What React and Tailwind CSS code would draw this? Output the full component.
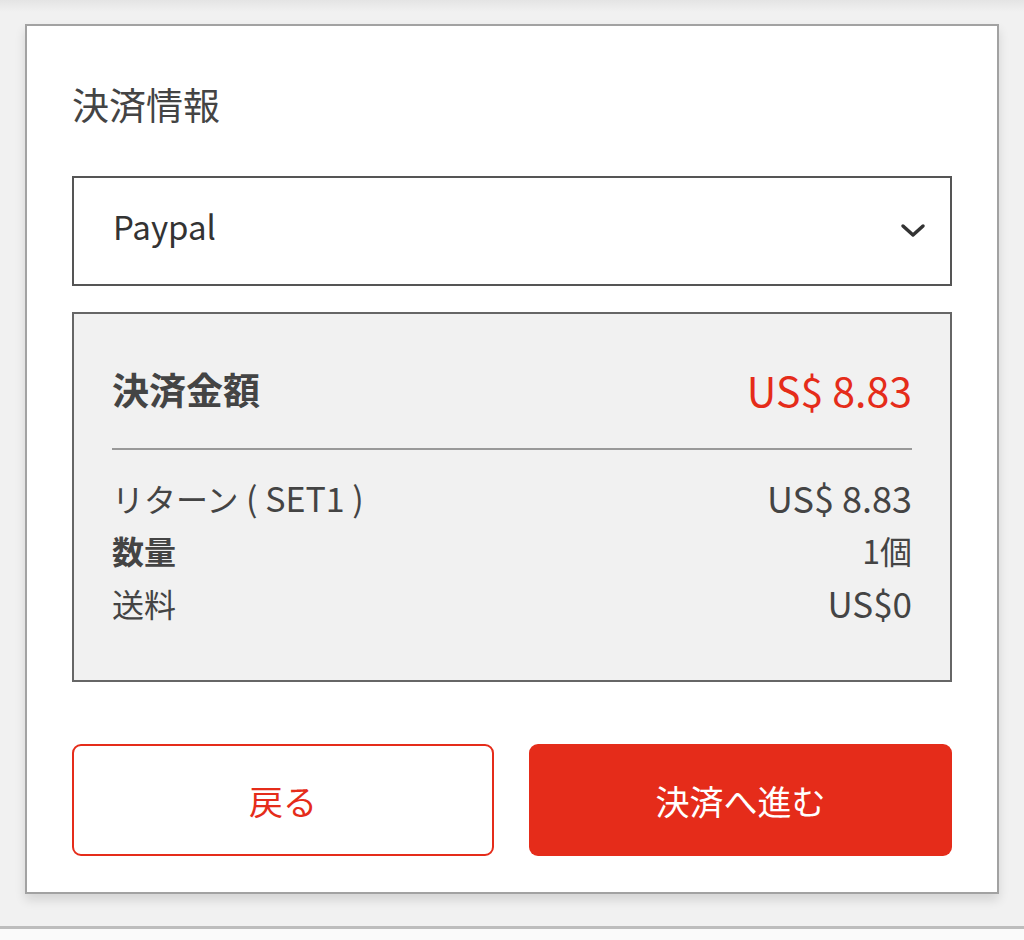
import React from "react";

const font = { fontFamily: '"Noto Sans CJK JP", "Noto Sans", sans-serif' };

export default function App() {
  return (
    <div className="w-[1024px] h-[940px] bg-[#f1f1f1] flex flex-col overflow-hidden" style={font}>
      <div className="h-[12px] bg-gradient-to-b from-[#e4e4e4] to-[#f1f1f1] shrink-0" />
      <div className="ml-[25px] mt-[12px] w-[974px] h-[870px] shrink-0 bg-white border-2 border-[#a2a2a2] shadow-[0_6px_10px_rgba(0,0,0,0.12)] px-[45px] pt-[54px] flex flex-col">
        <div className="h-[48px] leading-[48px] text-[37px] text-[#444]">決済情報</div>
        <div className="mt-[48px] h-[110px] border-2 border-[#555] flex items-center justify-between pl-[39px] pr-[24px]">
          <span className="text-[33px] text-[#333] mb-[8px]">Paypal</span>
          <svg width="26" height="16" viewBox="0 0 26 16">
            <polyline points="3,3 13,12 23,3" fill="none" stroke="#333" strokeWidth="3.5" strokeLinecap="round" strokeLinejoin="round" />
          </svg>
        </div>
        <div className="mt-[26px] h-[370px] bg-[#f1f1f1] border-2 border-[#666] px-[38px] pt-[48px] flex flex-col">
          <div className="h-[56px] flex items-center justify-between">
            <span className="text-[37px] font-bold text-[#444]">決済金額</span>
            <span className="text-[41px] text-[#e52c1a]">US$ 8.83</span>
          </div>
          <div className="mt-[30px] h-[2px] bg-[#999]" />
          <div className="mt-[21px] flex flex-col text-[32px] text-[#444]">
            <div className="h-[52px] flex items-center justify-between">
              <span>リターン<span className="text-[34px]"> ( SET1 )</span></span>
              <span className="text-[36px]">US$ 8.83</span>
            </div>
            <div className="h-[54px] flex items-center justify-between">
              <span className="font-bold">数量</span>
              <span>1個</span>
            </div>
            <div className="h-[52px] flex items-center justify-between">
              <span>送料</span>
              <span className="text-[35px]">US$0</span>
            </div>
          </div>
        </div>
        <div className="mt-[62px] h-[112px] flex gap-[35px]">
          <button className="w-[422px] rounded-[9px] border-2 border-[#e52c1a] bg-white text-[#e52c1a] text-[34px]">戻る</button>
          <button className="w-[423px] rounded-[9px] bg-[#e52c1a] text-white text-[34px]">決済へ進む</button>
        </div>
      </div>
      <div className="mt-[32px] h-[3px] bg-[#bdbdbd] shrink-0" />
      <div className="flex-1 bg-[#fafafa]" />
    </div>
  );
}
